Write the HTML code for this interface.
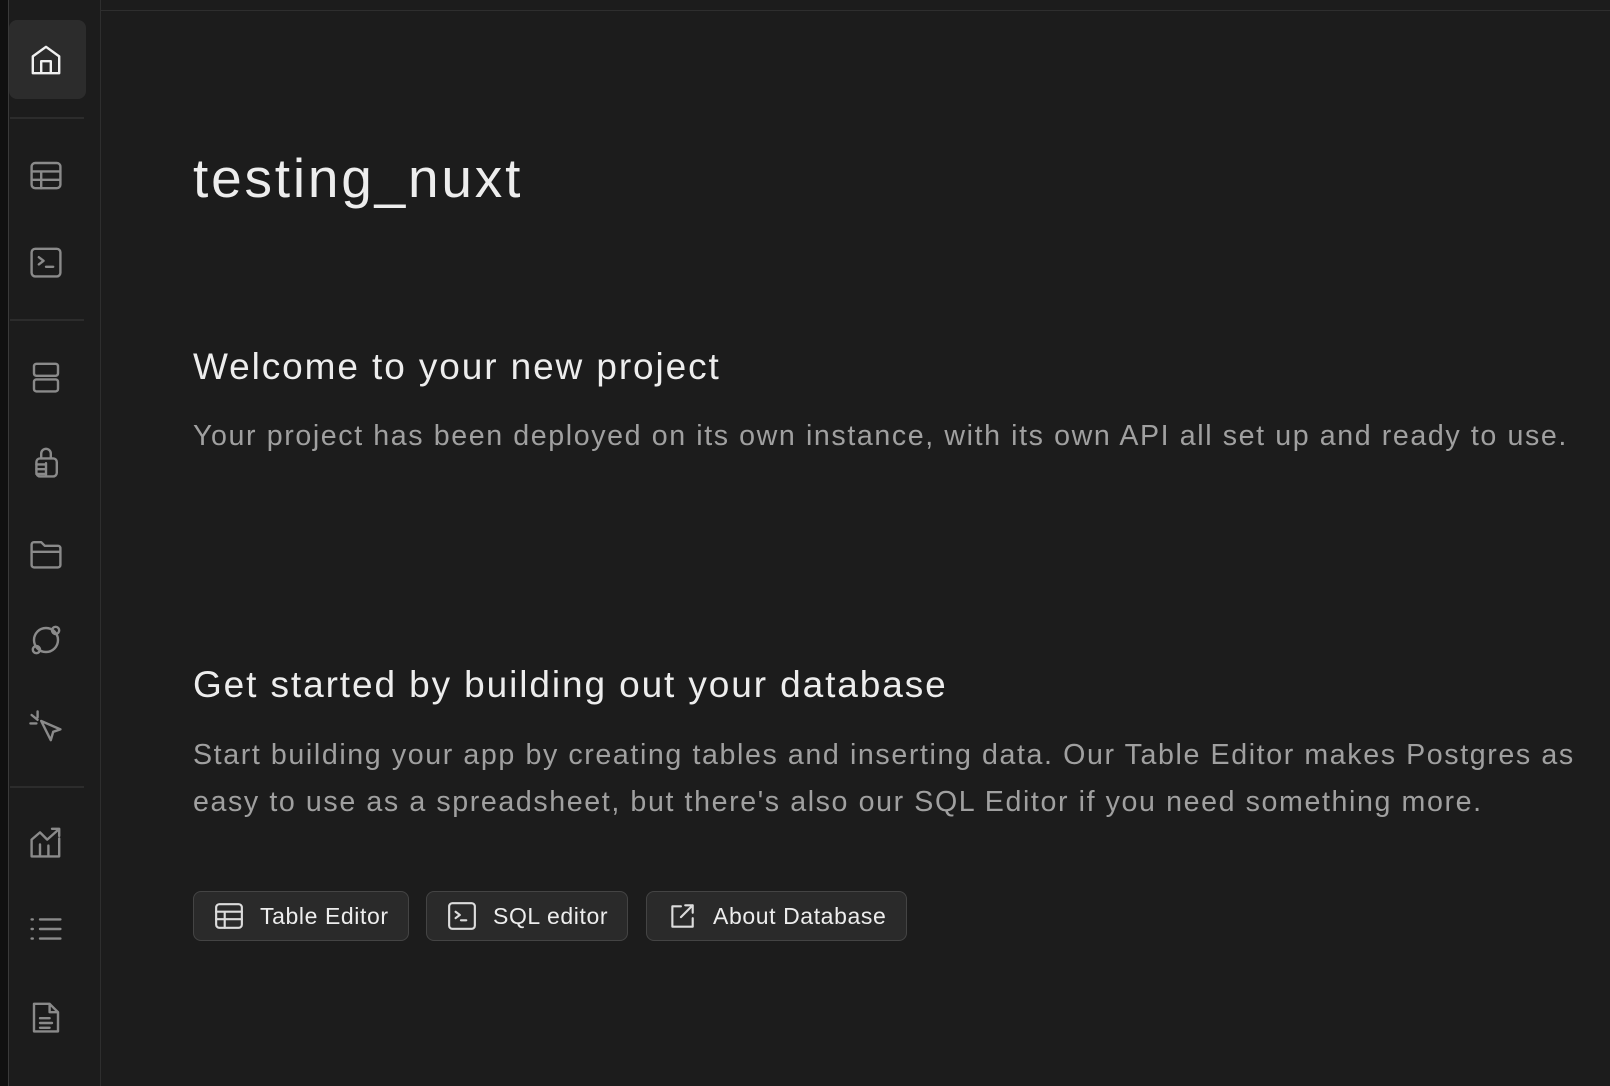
<!DOCTYPE html>
<html><head><meta charset="utf-8"><style>
*{margin:0;padding:0;box-sizing:border-box}
body{width:1610px;height:1086px;background:#1c1c1c;font-family:"Liberation Sans",sans-serif;position:relative;overflow:hidden}
.strip{position:absolute;left:0;top:0;width:9px;height:1086px;background:#101010;border-right:1px solid #3a3a3a}
.side{position:absolute;left:10px;top:0;width:91px;height:1086px;background:#1c1c1c;border-right:1px solid #2e2e2e}
.topline{position:absolute;left:101px;top:10px;right:0;height:1px;background:#2e2e2e}
.active{position:absolute;left:9px;top:20px;width:77px;height:79px;background:#2c2c2c;border-radius:8px}
.sep{position:absolute;left:10px;width:74px;height:2px;background:#2c2c2c}
.ic{position:absolute;left:28px;width:36px;height:36px}
.ic svg{width:36px;height:36px;fill:none;stroke:#8a8a8a;stroke-width:2;stroke-linecap:round;stroke-linejoin:round}
h1{position:absolute;left:193px;top:146px;font-size:55px;font-weight:400;color:#ededed;letter-spacing:2.8px}
h2{position:absolute;left:193px;font-size:37px;font-weight:400;color:#ededed;letter-spacing:1.9px}
p{position:absolute;left:193px;font-size:28.6px;color:#a0a0a0;line-height:47px;width:1410px;letter-spacing:1.6px}
.btn{position:absolute;top:891px;height:50px;background:#2a2a2a;border:1px solid #444;border-radius:8px;color:#ededed;font-size:23px;display:flex;align-items:center;padding-left:20px;letter-spacing:0.6px}
.btn svg{width:30px;height:30px;fill:none;stroke:#dcdcdc;stroke-width:2;margin-right:16px;stroke-linecap:round;stroke-linejoin:round}
</style></head><body>
<div class="strip"></div>
<div class="side"></div>
<div class="topline"></div>
<div class="active"></div>
<div class="sep" style="top:117px"></div>
<div class="sep" style="top:319px"></div>
<div class="sep" style="top:786px"></div>
<div class="ic" style="top:42px"><svg viewBox="0 0 30 30" style="stroke:#f0f0f0"><path d="M4 26V12L15 4l11 8v14z M11 26V16h8v10"/></svg></div>
<div class="ic" style="top:157px"><svg viewBox="0 0 30 30"><rect x="3" y="5" width="24" height="21" rx="3"/><path d="M3 12h24M3 19h24M11 12v14"/></svg></div>
<div class="ic" style="top:244px"><svg viewBox="0 0 30 30"><rect x="3" y="4" width="24" height="23" rx="3"/><path d="M9 11l4 3-4 3M15 19h6"/></svg></div>
<div class="ic" style="top:359px"><svg viewBox="0 0 30 30"><rect x="5" y="4" width="20" height="10" rx="2"/><rect x="5" y="17" width="20" height="10" rx="2"/></svg></div>
<div class="ic" style="top:444px"><svg viewBox="0 0 30 30"><path d="M11 12V8a4 4 0 0 1 8 0v4"/><rect x="7" y="12" width="17" height="15" rx="3"/><path d="M7 17h8M7 21h8M7 25h8M15 16v10"/></svg></div>
<div class="ic" style="top:535px"><svg viewBox="0 0 30 30"><path d="M3 8a2 2 0 0 1 2-2h6l3 3h11a2 2 0 0 1 2 2v14a2 2 0 0 1-2 2H5a2 2 0 0 1-2-2z M3 14h24"/></svg></div>
<div class="ic" style="top:622px"><svg viewBox="0 0 30 30"><circle cx="15" cy="15" r="10"/><circle cx="23" cy="7" r="3"/><circle cx="7" cy="23" r="3"/></svg></div>
<div class="ic" style="top:709px"><svg viewBox="0 0 30 30"><path d="M11 10l16 7-6 2-2 7z M3 5l5 4M8 2v5M2 12h5"/></svg></div>
<div class="ic" style="top:824px"><svg viewBox="0 0 30 30"><path d="M3 27V13l7-6 6 6 9-8M20 4h6v6M3 27h23V12M10 27V17M17 27V18"/></svg></div>
<div class="ic" style="top:911px"><svg viewBox="0 0 30 30"><path d="M10 7h17M10 15h17M10 23h17M3 7h1M3 15h1M3 23h1"/></svg></div>
<div class="ic" style="top:999px"><svg viewBox="0 0 30 30"><path d="M5 4h13l7 7v16H5z M18 4v7h7M10 16h8M10 20h10M10 24h8"/></svg></div>

<h1>testing_nuxt</h1>
<h2 style="top:346px">Welcome to your new project</h2>
<p style="top:413px">Your project has been deployed on its own instance, with its own API all set up and ready to use.</p>
<h2 style="top:664px">Get started by building out your database</h2>
<p style="top:732px">Start building your app by creating tables and inserting data. Our Table Editor makes Postgres as easy to use as a spreadsheet, but there's also our SQL Editor if you need something more.</p>

<div class="btn" style="left:193px;width:216px"><svg viewBox="0 0 28 28"><rect x="2" y="3" width="24" height="22" rx="3"/><path d="M2 10h24M2 17h24M10 10v15"/></svg>Table Editor</div>
<div class="btn" style="left:426px;width:202px"><svg viewBox="0 0 28 28"><rect x="2" y="2" width="24" height="24" rx="3"/><path d="M8 10l4 3-4 3M13 18h5"/></svg>SQL editor</div>
<div class="btn" style="left:646px;width:261px"><svg viewBox="0 0 28 28"><path d="M13 5H5v19h19v-8M17 4h7v7M24 4L13 15"/></svg>About Database</div>
</body></html>
